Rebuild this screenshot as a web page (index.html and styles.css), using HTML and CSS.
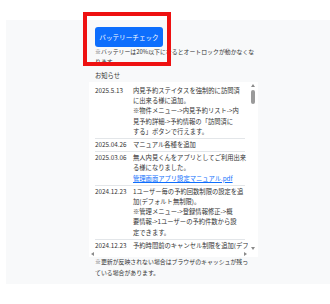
FILE: index.html
```html
<!DOCTYPE html>
<html>
<head>
	<meta charset="UTF-8">
	<title>お知らせ</title>
	<link rel="stylesheet" href="styles.css">
</head>
<body>
	<div class="panel">
		<div class="col">
			<div class="top">
				<button class="btn-check">バッテリーチェック</button>
				<p class="note">※バッテリーは20%以下になるとオートロックが動かなくな<br>ります。</p>
				<div class="head">お知らせ</div>
			</div>
			<div class="newsbox">
				<div class="viewport">
					<table class="news">
						<tr>
							<td class="date">2025.5.13</td>
							<td class="body">内見予約ステイタスを強制的に訪問済<br>に出来る様に追加。<br>※物件メニュー-&gt;内見予約リスト-&gt;内<br>見予約詳細-&gt;予約情報の「訪問済に<br>する」ボタンで行えます。</td>
						</tr>
						<tr>
							<td class="date">2025.04.26</td>
							<td class="body">マニュアル各種を追加</td>
						</tr>
						<tr>
							<td class="date">2025.03.06</td>
							<td class="body">無人内見くんをアプリとしてご利用出来<br>る様になりました。<br><a href="#">管理画面アプリ設定マニュアル.pdf</a></td>
						</tr>
						<tr>
							<td class="date">2024.12.23</td>
							<td class="body">1ユーザー毎の予約回数制限の設定を追<br>加(デフォルト無制限)。<br>※管理メニュー-&gt;登録情報修正-&gt;概<br>要情報-&gt;1ユーザーの予約件数から設<br>定できます。</td>
						</tr>
						<tr>
							<td class="date">2024.12.23</td>
							<td class="body">予約時間前のキャンセル制限を追加(デフォルト制限なし)。</td>
						</tr>
					</table>
				</div>
				<span class="sb-up"></span>
				<span class="sb-thumb"></span>
				<span class="sb-down"></span>
				<span class="sb-left"></span>
				<span class="sb-right"></span>
			</div>
			<p class="note bottom">※更新が反映されない場合はブラウザのキャッシュが残っている場合があります。</p>
		</div>
		<div class="mark"></div>
	</div>
</body>
</html>
```

FILE: styles.css
```css
body{
	margin: 0;
	background: #fff;
	font-family: "Noto Sans CJK JP", "Noto Sans", sans-serif;
	color: #333;
}

.panel{
	position: relative;
	margin: 20px 0 0 6px;
	height: 264px;
	background: #f8f9fa;
}

.col{
	margin-left: 83px;
	width: 169px;
	padding-top: 7px;
}

.top{
	padding-left: 6px;
}

.btn-check{
	display: block;
	width: 68px;
	height: 20px;
	padding: 0;
	border: none;
	border-radius: 3px;
	background: #0d6efd;
	color: #fff;
	font-family: inherit;
	font-size: 6.6px;
}

.note{
	margin: 0;
	font-size: 5.9px;
	line-height: 10px;
	white-space: nowrap;
}

.head{
	margin-top: 4px;
	font-size: 6.3px;
	line-height: 10px;
}

.newsbox{
	position: relative;
	margin-top: 1px;
	height: 175px;
	background: #fff;
}

.viewport{
	width: 153px;
	height: 164px;
	padding: 3px 0 0 6px;
	overflow: hidden;
}

.news{
	table-layout: fixed;
	border-collapse: collapse;
	width: 150px;
	font-size: 6.3px;
	line-height: 10.2px;
}

.news td{
	padding: 1px 0;
	vertical-align: top;
	white-space: nowrap;
}

.news tr + tr td{
	border-top: 1px solid #e3e6e9;
}

.news .date{
	width: 38px;
}

.news a{
	color: #0d6efd;
}

.sb-thumb{
	position: absolute;
	left: 162px;
	top: 8px;
	width: 4px;
	height: 14px;
	border-radius: 2px;
	background: #9a9a9a;
}

.sb-up, .sb-down, .sb-left, .sb-right{
	position: absolute;
	width: 0;
	height: 0;
	border: 2.5px solid transparent;
}

.sb-up{
	left: 161.5px;
	top: 1.5px;
	border-bottom: 3px solid #8a8a8a;
	border-top: 0;
}

.sb-down{
	left: 161.5px;
	top: 165px;
	border-top: 3px solid #8a8a8a;
	border-bottom: 0;
}

.sb-left{
	left: 2px;
	top: 170px;
	border-right: 3px solid #8a8a8a;
	border-left: 0;
}

.sb-right{
	left: 155px;
	top: 170px;
	border-left: 3px solid #8a8a8a;
	border-right: 0;
}

.note.bottom{
	padding-left: 6px;
	margin-top: 0;
	line-height: 10.5px;
	white-space: normal;
	width: 156px;
}

.mark{
	position: absolute;
	left: 77px;
	top: -8px;
	width: 80px;
	height: 46px;
	border: 4px solid #ee1111;
}
```
